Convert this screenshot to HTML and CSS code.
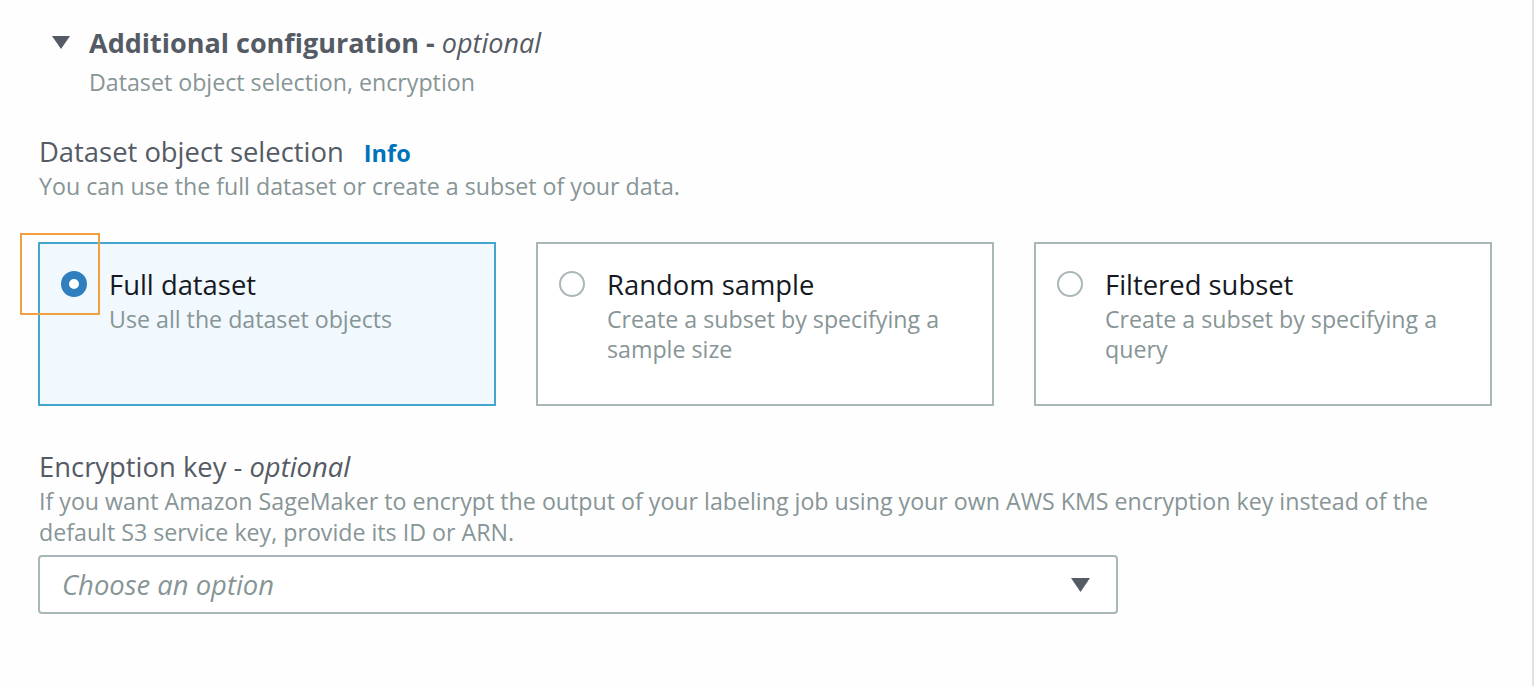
FILE: index.html
```html
<!DOCTYPE html>
<html lang="en">
<head>
<meta charset="utf-8">
<title>Additional configuration</title>
<link rel="stylesheet" href="styles.css">
</head>
<body>
<div class="page">
  <div class="expander">
    <div class="expander-head">
      <svg class="caret" width="18" height="13" viewBox="0 0 18 13"><path d="M0 0 H18 L9 13 Z" fill="#545b64"/></svg>
      <span class="expander-title">Additional configuration - <em>optional</em></span>
    </div>
    <div class="expander-sub">Dataset object selection, encryption</div>
  </div>

  <div class="field">
    <div class="field-label">Dataset object selection <a class="info" href="#">Info</a></div>
    <div class="field-desc">You can use the full dataset or create a subset of your data.</div>
    <div class="tiles">
      <div class="tile selected">
        <span class="radio checked"><span class="focus-ring"></span></span>
        <div class="tile-text">
          <div class="tile-label">Full dataset</div>
          <div class="tile-desc">Use all the dataset objects</div>
        </div>
      </div>
      <div class="tile">
        <span class="radio"></span>
        <div class="tile-text">
          <div class="tile-label">Random sample</div>
          <div class="tile-desc">Create a subset by specifying a sample size</div>
        </div>
      </div>
      <div class="tile">
        <span class="radio"></span>
        <div class="tile-text">
          <div class="tile-label">Filtered subset</div>
          <div class="tile-desc">Create a subset by specifying a query</div>
        </div>
      </div>
    </div>
  </div>

  <div class="field enc">
    <div class="field-label">Encryption key - <em>optional</em></div>
    <div class="field-desc enc-desc">If you want Amazon SageMaker to encrypt the output of your labeling job using your own AWS KMS encryption key instead of the default S3 service key, provide its ID or ARN.</div>
    <div class="select">
      <span class="placeholder">Choose an option</span>
      <svg class="select-caret" width="19" height="14" viewBox="0 0 19 14"><path d="M0 0 H19 L9.5 14 Z" fill="#545b64"/></svg>
    </div>
  </div>
</div>
</body>
</html>
```

FILE: styles.css
```css
* { box-sizing: border-box; }
html, body { margin: 0; padding: 0; background: #ffffff; }
body {
  font-family: "Open Sans", "Noto Sans", "Liberation Sans", sans-serif;
  color: #545b64;
}
.page {
  width: 1534px;
  height: 686px;
  border-right: 2px solid #dfe3e6;
  padding: 25px 0 0 38px;
  background: #fefefe;
}
.expander-head {
  display: flex;
  align-items: center;
  height: 36px;
  padding-left: 14px;
}
.caret { margin-right: 19px; margin-top: -1px; }
.expander-title {
  font-size: 27px;
  font-weight: 700;
  color: #545b64;
  line-height: 36px;
}
.expander-title em { font-weight: 400; }
.expander-sub {
  margin: 6px 0 0 51px;
  font-size: 23.2px;
  line-height: 30px;
  color: #879596;
}
.field { margin-top: 37px; }
.field-label {
  font-size: 27.4px;
  line-height: 36px;
  color: #545b64;
  padding-left: 1px;
}
.info {
  font-size: 23.5px;
  font-weight: 700;
  color: #0073bb;
  text-decoration: none;
  margin-left: 13px;
}
.field-desc {
  font-size: 23.2px;
  line-height: 30px;
  color: #879596;
  padding-left: 1px;
}
.tiles {
  display: grid;
  grid-template-columns: repeat(3, 458px);
  column-gap: 40px;
  margin-top: 41px;
}
.tile {
  height: 164px;
  border: 2px solid #aab7b8;
  background: #ffffff;
  display: flex;
  align-items: flex-start;
  padding: 23px 20px 0 21px;
}
.tile.selected {
  border-color: #44a6cf;
  background: #f1f8fe;
}
.radio {
  position: relative;
  flex: none;
  width: 26px;
  height: 26px;
  margin-top: 4px;
  border-radius: 50%;
  border: 2px solid #aab7b8;
  background: #ffffff;
  margin-right: 22px;
}
.radio.checked {
  border: 8px solid #2f7ebd;
  background: #ffffff;
}
.focus-ring {
  position: absolute;
  left: -49px;
  top: -46px;
  width: 80px;
  height: 82px;
  border: 2px solid #f0a03c;
  pointer-events: none;
}
.tile-label {
  font-size: 27.4px;
  line-height: 36px;
  color: #16191f;
}
.tile-desc {
  margin-top: 1px;
  font-size: 23.2px;
  line-height: 30px;
  color: #879596;
}
.enc { margin-top: 43px; }
.enc-desc { line-height: 31px; max-width: 1425px; margin-top: 1px; }
.select {
  margin-top: 7px;
  width: 1080px;
  height: 59px;
  border: 2px solid #aab7b8;
  border-radius: 4px;
  display: flex;
  align-items: center;
  justify-content: space-between;
  padding: 0 26px 0 22px;
  background: #ffffff;
}
.placeholder {
  font-size: 27.4px;
  font-style: italic;
  color: #879596;
}
```
